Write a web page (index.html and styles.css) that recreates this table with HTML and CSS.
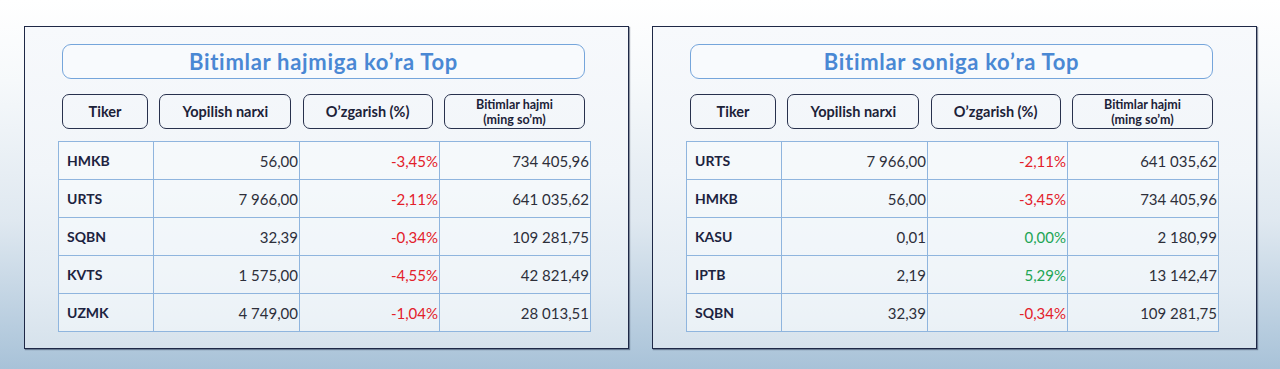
FILE: index.html
```html
<!DOCTYPE html>
<html lang="uz">
<head>
<meta charset="utf-8">
<title>Top</title>
<link rel="stylesheet" href="styles.css">
</head>
<body>
<div class="page">
  <section class="panel">
    <div class="title">Bitimlar hajmiga ko’ra Top</div>
    <div class="heads">
      <div class="head">Tiker</div>
      <div class="head">Yopilish narxi</div>
      <div class="head">O’zgarish (%)</div>
      <div class="head small">Bitimlar hajmi<br>(ming so’m)</div>
    </div>
    <table class="grid">
      <colgroup><col class="c1"><col class="c2"><col class="c3"><col class="c4"></colgroup>
      <tr><td class="tk">HMKB</td><td>56,00</td><td class="neg">-3,45%</td><td>734 405,96</td></tr>
      <tr><td class="tk">URTS</td><td>7 966,00</td><td class="neg">-2,11%</td><td>641 035,62</td></tr>
      <tr><td class="tk">SQBN</td><td>32,39</td><td class="neg">-0,34%</td><td>109 281,75</td></tr>
      <tr><td class="tk">KVTS</td><td>1 575,00</td><td class="neg">-4,55%</td><td>42 821,49</td></tr>
      <tr><td class="tk">UZMK</td><td>4 749,00</td><td class="neg">-1,04%</td><td>28 013,51</td></tr>
    </table>
  </section>
  <section class="panel">
    <div class="title">Bitimlar soniga ko’ra Top</div>
    <div class="heads">
      <div class="head">Tiker</div>
      <div class="head">Yopilish narxi</div>
      <div class="head">O’zgarish (%)</div>
      <div class="head small">Bitimlar hajmi<br>(ming so’m)</div>
    </div>
    <table class="grid">
      <colgroup><col class="c1"><col class="c2"><col class="c3"><col class="c4"></colgroup>
      <tr><td class="tk">URTS</td><td>7 966,00</td><td class="neg">-2,11%</td><td>641 035,62</td></tr>
      <tr><td class="tk">HMKB</td><td>56,00</td><td class="neg">-3,45%</td><td>734 405,96</td></tr>
      <tr><td class="tk">KASU</td><td>0,01</td><td class="pos">0,00%</td><td>2 180,99</td></tr>
      <tr><td class="tk">IPTB</td><td>2,19</td><td class="pos">5,29%</td><td>13 142,47</td></tr>
      <tr><td class="tk">SQBN</td><td>32,39</td><td class="neg">-0,34%</td><td>109 281,75</td></tr>
    </table>
  </section>
</div>
</body>
</html>
```
FILE: styles.css
```css
html, body {
  margin: 0;
  padding: 0;
}
body {
  width: 1280px;
  height: 369px;
  overflow: hidden;
  background: linear-gradient(180deg, #ffffff 0%, #f6f9fb 22%, #dfe8f0 60%, #a8c2d8 100%);
  font-family: "Lato", "Open Sans", sans-serif;
}
.page {
  display: flex;
  gap: 23px;
  padding: 26px 23px 0 24px;
}
.panel {
  box-sizing: border-box;
  width: 605px;
  height: 323px;
  border: 1px solid #1e2846;
  box-shadow: 1px 1px 1px rgba(20, 30, 60, 0.45);
  background: linear-gradient(180deg, #f7f9fc 0%, #f1f5f9 45%, #e4ecf3 80%, #d6e2ec 100%);
  padding: 17px 0 0 33px;
}
.title {
  box-sizing: border-box;
  margin-left: 4px;
  width: 523px;
  height: 35px;
  border: 1.5px solid #75a5db;
  border-radius: 9px;
  background: #f8fafd;
  color: #4a88d4;
  font-weight: 700;
  font-size: 22px;
  letter-spacing: 0.7px;
  display: flex;
  align-items: center;
  justify-content: center;
}
.heads {
  margin: 15px 0 0 4px;
  width: 523px;
  display: grid;
  grid-template-columns: 86px 132px 130px 141px;
  justify-content: space-between;
}
.head {
  box-sizing: border-box;
  height: 35px;
  border: 1.5px solid #28314d;
  border-radius: 7px;
  display: flex;
  align-items: center;
  justify-content: center;
  text-align: center;
  font-weight: 700;
  font-size: 14.5px;
  color: #1c2238;
}
.head.small {
  font-size: 12.5px;
  line-height: 15px;
}
.grid {
  margin-top: 12px;
  border-collapse: collapse;
  table-layout: fixed;
  width: 532px;
  background: rgba(248, 251, 253, 0.55);
}
.grid .c1 { width: 95px; }
.grid .c2 { width: 146px; }
.grid .c3 { width: 140px; }
.grid .c4 { width: 151px; }
.grid td {
  border: 1px solid #8fb5de;
  height: 37px;
  padding: 0 1px 0 0;
  text-align: right;
  font-size: 15px;
  color: #2d2f3a;
  vertical-align: middle;
  white-space: nowrap;
}
.grid td.tk {
  text-align: left;
  padding-left: 8px;
  font-weight: 700;
  font-size: 14px;
  color: #1c2340;
}
.grid td.neg { color: #e3202a; }
.grid td.pos { color: #22a554; }
```
